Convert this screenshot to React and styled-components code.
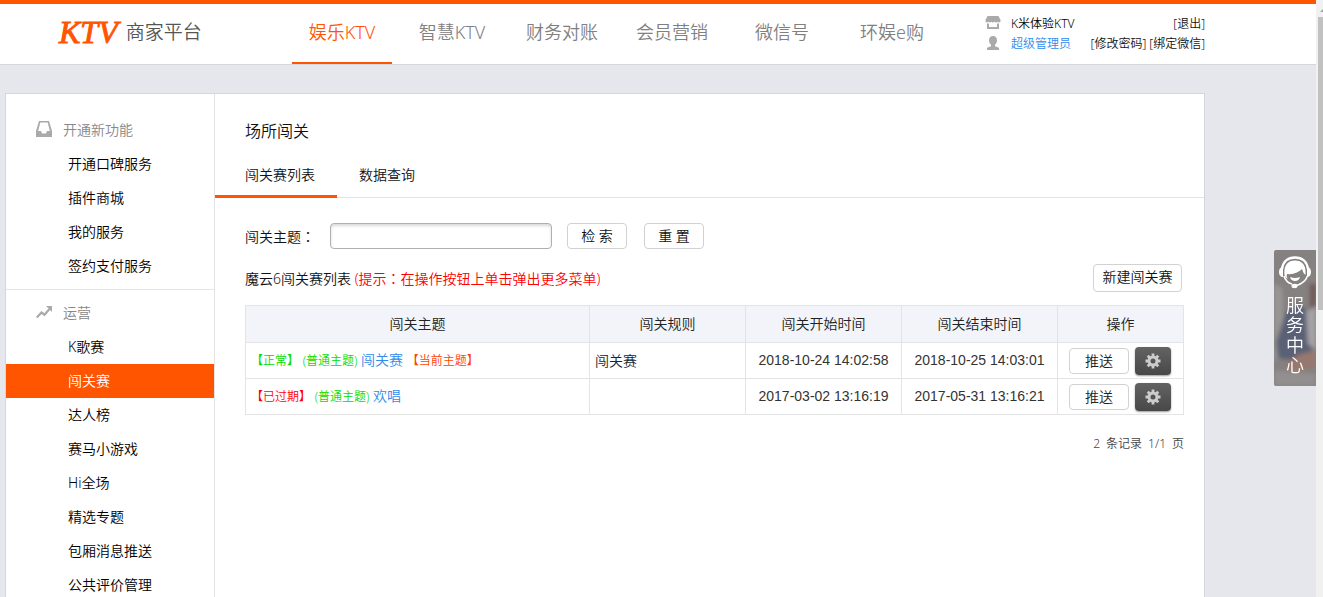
import React, { useState } from 'react';
import styled, { createGlobalStyle } from 'styled-components';

const GlobalStyle = createGlobalStyle`
  * {
    box-sizing: border-box;
  }

  body {
    margin: 0;
    background: #e6e7ec;
    color: #111;
    font-family: 'Noto Sans', 'Noto Sans CJK SC', sans-serif;
    font-size: 14px;
    font-weight: 350;
    overflow: hidden;
  }

  a {
    color: inherit;
    text-decoration: none;
  }

  button,
  input {
    font: inherit;
    color: inherit;
  }
`;

const Page = styled.div`
  height: 100vh;
  overflow: hidden;
  padding-right: 7px;
`;

const Header = styled.header`
  display: flex;
  height: 65px;
  padding: 0 111px 0 59px;
  background: #fff;
  border-top: 4px solid #ff5400;
  border-bottom: 1px solid #d5d6da;
`;

const Logo = styled.a`
  display: flex;
  align-items: center;
  gap: 8px;
  width: 233px;
  height: 56px;
`;

const LogoMark = styled.span`
  color: #ff5400;
  font: italic 400 32px/40px 'Liberation Serif', serif;
  -webkit-text-stroke: 1px #ff5400;
`;

const LogoText = styled.span`
  color: #555;
  font-size: 19px;
  line-height: 26px;
`;

const TopNav = styled.nav`
  display: flex;
  gap: 10px;
`;

const TopLink = styled.a`
  width: 100px;
  height: 60px;
  line-height: 56px;
  text-align: center;
  font-size: 18px;
  color: ${(p) => (p.$active ? '#ff5400' : '#808080')};
  border-bottom: 2px solid ${(p) => (p.$active ? '#ff5400' : 'transparent')};
`;

const Account = styled.div`
  width: 220px;
  margin-left: auto;
  padding-top: 9px;
  font-size: 12px;
`;

const AccountRow = styled.div`
  display: flex;
  align-items: center;
  height: 20px;

  svg {
    margin-right: 10px;
  }
`;

const AccountName = styled.span`
  flex: 1;
  color: ${(p) => (p.$link ? '#2f8cea' : '#000')};
`;

const AccountLink = styled.a`
  margin-left: 3px;
`;

const Panel = styled.div`
  display: flex;
  min-height: 600px;
  margin: 28px 111px 0 5px;
  background: #fff;
  border: 1px solid #d5d6da;
`;

const Sidebar = styled.nav`
  width: 209px;
  padding-top: 13px;
  border-right: 1px solid #e4e4e4;
`;

const MenuSection = styled.section`
  padding: 6px 0;
  border-bottom: 1px solid #e4e4e4;
`;

const MenuTitle = styled.h2`
  display: flex;
  align-items: center;
  gap: 11px;
  height: 34px;
  margin: 0;
  padding: 0 0 2px 30px;
  color: #888;
  font-size: 14px;
  font-weight: inherit;
`;

const MenuLink = styled.a`
  display: block;
  padding-left: 62px;
  line-height: 34px;
  color: ${(p) => (p.$active ? '#fff' : '#000')};
  background: ${(p) => (p.$active ? '#ff5400' : 'transparent')};
`;

const Main = styled.main`
  flex: 1;
  min-width: 0;
`;

const Title = styled.h1`
  margin: 0;
  padding: 20px 30px 0;
  font-size: 16px;
  line-height: 34px;
  font-weight: inherit;
`;

const Tabs = styled.div`
  display: flex;
  height: 50px;
  border-bottom: 1px solid #e4e4e4;
`;

const Tab = styled.button`
  height: 50px;
  padding: 8px 22px 3px;
  border: 0;
  border-bottom: 3px solid ${(p) => (p.$active ? '#ff5400' : 'transparent')};
  background: none;

  &:first-child {
    padding-left: 30px;
  }
`;

const Content = styled.div`
  padding: 25px 20px 0 30px;
`;

const SearchForm = styled.form`
  display: flex;
  align-items: center;
`;

const SearchLabel = styled.label`
  width: 85px;
`;

const Colon = styled.span`
  font-family: 'Noto Sans CJK TC', sans-serif;
`;

const SearchInput = styled.input`
  width: 222px;
  height: 26px;
  margin-right: 15px;
  padding: 0 6px;
  border: 1px solid #b0b0b0;
  border-radius: 4px;
  box-shadow: inset 0 2px 3px rgba(0, 0, 0, 0.15);
`;

const Button = styled.button`
  width: 60px;
  height: 26px;
  padding: 0;
  line-height: 20px;
  background: #fff;
  border: 1px solid #d2d2d2;
  border-radius: 4px;
`;

const ResetButton = styled(Button)`
  margin-left: 17px;
`;

const CreateButton = styled(Button)`
  width: 89px;
  height: 28px;
  margin-right: 2px;
  padding-bottom: 2px;
`;

const ListHeader = styled.div`
  display: flex;
  align-items: center;
  justify-content: space-between;
  margin: 15px 0 13px;
`;

const Hint = styled.span`
  color: #f00;
`;

const Table = styled.table`
  width: 100%;
  table-layout: fixed;
  border-collapse: collapse;
  color: #222;
`;

const HeadCell = styled.th`
  width: ${(p) => p.$width || 'auto'};
  height: 37px;
  padding: 0;
  line-height: 20px;
  font-weight: inherit;
  background: #f3f4f9;
  border: 1px solid #e4e4e4;
`;

const Cell = styled.td`
  height: 36px;
  padding: 0 5px;
  line-height: 20px;
  border: 1px solid #e4e4e4;
`;

const TimeCell = styled(Cell)`
  padding-bottom: 2px;
  color: #333;
  font-family: 'Liberation Sans', Arial, sans-serif;
  text-align: center;
`;

const ActionCell = styled(Cell)`
  padding: 0 6px 0 5px;
`;

const Tag = styled.span`
  font-size: 12px;
  color: ${(p) => p.$color};
`;

const ThemeLink = styled.a`
  color: #2f8cea;
`;

const Actions = styled.div`
  display: flex;
  align-items: center;
  justify-content: center;
  gap: 6px;
`;

const GearButton = styled.button`
  display: flex;
  align-items: center;
  justify-content: center;
  width: 36px;
  height: 28px;
  padding: 0;
  border: 0;
  border-radius: 4px;
  background: linear-gradient(#636363, #484848);
  box-shadow: 0 1px 2px rgba(0, 0, 0, 0.4);
`;

const Pager = styled.div`
  display: flex;
  justify-content: flex-end;
  gap: 6px;
  margin-top: 19px;
  line-height: 20px;
  font-size: 12px;
  color: #444;
`;

const Service = styled.a`
  position: fixed;
  top: 250px;
  right: 7px;
  width: 42px;
  height: 136px;
  overflow: hidden;
  border-radius: 2px 0 0 2px;
  color: #fff;
`;

const ServiceBackdrop = styled.svg`
  position: absolute;
  inset: 0;
`;

const ServiceBody = styled.span`
  position: relative;
  display: flex;
  flex-direction: column;
  align-items: center;
  padding-top: 5px;
`;

const ServiceLabel = styled.span`
  width: 18px;
  margin-top: 6px;
  font-size: 18px;
  line-height: 20px;
`;

const ScrollTrack = styled.div`
  position: fixed;
  top: 0;
  right: 0;
  bottom: 0;
  width: 7px;
  padding: 9px 0 0 2px;
  background: #f1f1f1;
`;

const ScrollArrow = styled.svg`
  display: block;
`;

const ScrollThumb = styled.div`
  height: 293px;
  margin-top: 4px;
  background: #c1c1c1;
`;

const ShopIcon = () => (
  <svg width="16" height="16" viewBox="0 0 16 16" fill="#aaa" aria-hidden="true">
    <path d="M2.500 1h11L15.500 5v1.500q-1.300 1.600-2.800.3-1.500 1.500-3.200 0-1.500 1.400-3 0-1.700 1.500-3.200 0Q1.800 8.100.5 6.500V5z" />
    <path d="M2 8.500h2V12h8V8.500h2V14H2z" />
  </svg>
);

const UserIcon = () => (
  <svg width="16" height="16" viewBox="0 0 16 16" fill="#aaa" aria-hidden="true">
    <path d="M8 1c2.700 0 4 1.800 4 4.200 0 2-.9 3.700-2 4.600v1.400l4 1.600V15H2v-2.200l4-1.600V9.800C4.900 8.900 4 7.200 4 5.200 4 2.800 5.300 1 8 1z" />
  </svg>
);

const TrayIcon = () => (
  <svg width="16" height="16" viewBox="0 0 16 16" fill="#aaa" aria-hidden="true">
    <path fillRule="evenodd" d="M3 0h10l3 10v6H0v-6zM4.300 1.500L2.200 10H5l1 2.500h4L11 10h2.800L11.700 1.500z" />
  </svg>
);

const TrendIcon = () => (
  <svg width="16" height="14" viewBox="0 0 16 14" aria-hidden="true">
    <path d="M.8 12.500l4.700-5 3 2.200L13.500 4" fill="none" stroke="#aaa" strokeWidth="2.200" />
    <path d="M10 1h6v6z" fill="#aaa" />
  </svg>
);

const GearIcon = () => (
  <svg width="16" height="16" viewBox="-8 -8 16 16" aria-hidden="true">
    <circle r="4" fill="none" stroke="#ccc" strokeWidth="3" />
    {[0, 45, 90, 135].map((angle) => (
      <path
        key={angle}
        d="M-1.400-7.500h2.800v3h-2.800zM-1.400 4.500h2.800v3h-2.800z"
        fill="#ccc"
        transform={`rotate(${angle})`}
      />
    ))}
  </svg>
);

const HeadsetIcon = () => (
  <svg width="34" height="34" viewBox="0 0 34 34" aria-hidden="true">
    <path d="M4 14C5 6.500 10 2.500 17 2.500S29 6.500 30 14" fill="none" stroke="#fff" strokeWidth="2.400" />
    <path d="M5 12v10H4q-3-1-3-5t3-5zM29 12v10h1q3-1 3-5t-3-5z" fill="#fff" />
    <path d="M6.500 20C5.500 10 10 5.500 17 5.500s11.500 4.500 10.500 14.500q-2.500-2-3.500-6-6 6-15 5-1 2 .5 5-2.500-1.500-3-4z" fill="#fff" />
    <path d="M12 22q5 2 10 0-1 4-5 4t-5-4z" fill="#fff" />
    <path d="M6 21q2 6.500 8 8M29.500 21q-2.500 7-11 9.500" fill="none" stroke="#fff" strokeWidth="1.600" />
    <ellipse cx="16.500" cy="31" rx="3" ry="2.200" fill="#fff" />
  </svg>
);

const topNav = ['娱乐KTV', '智慧KTV', '财务对账', '会员营销', '微信号', '环娱e购'];

const menu = [
  {
    title: '开通新功能',
    icon: <TrayIcon />,
    items: ['开通口碑服务', '插件商城', '我的服务', '签约支付服务'],
  },
  {
    title: '运营',
    icon: <TrendIcon />,
    items: ['K歌赛', '闯关赛', '达人榜', '赛马小游戏', 'Hi全场', '精选专题', '包厢消息推送', '公共评价管理'],
  },
];

const tabs = ['闯关赛列表', '数据查询'];

const rows = [
  {
    status: '【正常】',
    color: '#0d0',
    name: '闯关赛',
    current: true,
    rule: '闯关赛',
    start: '2018-10-24 14:02:58',
    end: '2018-10-25 14:03:01',
  },
  {
    status: '【已过期】',
    color: '#f00',
    name: '欢唱',
    rule: '',
    start: '2017-03-02 13:16:19',
    end: '2017-05-31 13:16:21',
  },
];

const App = () => {
  const [tab, setTab] = useState(0);

  return (
    <Page>
      <GlobalStyle />
      <Header>
        <Logo href="#">
          <LogoMark>KTV</LogoMark>
          <LogoText>商家平台</LogoText>
        </Logo>
        <TopNav>
          {topNav.map((name, i) => (
            <TopLink key={name} href="#" $active={i === 0}>{name}</TopLink>
          ))}
        </TopNav>
        <Account>
          <AccountRow>
            <ShopIcon />
            <AccountName>K米体验KTV</AccountName>
            <AccountLink href="#">[退出]</AccountLink>
          </AccountRow>
          <AccountRow>
            <UserIcon />
            <AccountName $link>超级管理员</AccountName>
            <AccountLink href="#">[修改密码]</AccountLink>
            <AccountLink href="#">[绑定微信]</AccountLink>
          </AccountRow>
        </Account>
      </Header>

      <Panel>
        <Sidebar>
          {menu.map((section) => (
            <MenuSection key={section.title}>
              <MenuTitle>{section.icon}{section.title}</MenuTitle>
              {section.items.map((item) => (
                <MenuLink key={item} href="#" $active={item === '闯关赛'}>{item}</MenuLink>
              ))}
            </MenuSection>
          ))}
        </Sidebar>

        <Main>
          <Title>场所闯关</Title>
          <Tabs>
            {tabs.map((name, i) => (
              <Tab key={name} type="button" $active={i === tab} onClick={() => setTab(i)}>{name}</Tab>
            ))}
          </Tabs>
          <Content>
            <SearchForm onSubmit={(e) => e.preventDefault()}>
              <SearchLabel htmlFor="theme">闯关主题<Colon>：</Colon></SearchLabel>
              <SearchInput id="theme" type="text" />
              <Button type="submit">检 索</Button>
              <ResetButton type="reset">重 置</ResetButton>
            </SearchForm>

            <ListHeader>
              <span>
                魔云6闯关赛列表 <Hint>(提示<Colon>：</Colon>在操作按钮上单击弹出更多菜单)</Hint>
              </span>
              <CreateButton type="button">新建闯关赛</CreateButton>
            </ListHeader>

            <Table>
              <thead>
                <tr>
                  <HeadCell>闯关主题</HeadCell>
                  <HeadCell $width="156px">闯关规则</HeadCell>
                  <HeadCell $width="156px">闯关开始时间</HeadCell>
                  <HeadCell $width="156px">闯关结束时间</HeadCell>
                  <HeadCell $width="126px">操作</HeadCell>
                </tr>
              </thead>
              <tbody>
                {rows.map((row) => (
                  <tr key={row.name}>
                    <Cell>
                      <Tag $color={row.color}>{row.status}</Tag>{' '}
                      <Tag $color="#0d0">(普通主题)</Tag>{' '}
                      <ThemeLink href="#">{row.name}</ThemeLink>{' '}
                      {row.current && <Tag $color="#ff4200">【当前主题】</Tag>}
                    </Cell>
                    <Cell>{row.rule}</Cell>
                    <TimeCell>{row.start}</TimeCell>
                    <TimeCell>{row.end}</TimeCell>
                    <ActionCell>
                      <Actions>
                        <Button type="button">推送</Button>
                        <GearButton type="button" aria-label="更多"><GearIcon /></GearButton>
                      </Actions>
                    </ActionCell>
                  </tr>
                ))}
              </tbody>
            </Table>

            <Pager>
              <span>2</span>
              <span>条记录</span>
              <span>1/1</span>
              <span>页</span>
            </Pager>
          </Content>
        </Main>
      </Panel>

      <Service href="#">
        <ServiceBackdrop width="42" height="136" viewBox="0 0 42 136" aria-hidden="true">
          <defs>
            <filter id="soften">
              <feGaussianBlur stdDeviation="2" />
            </filter>
          </defs>
          <rect width="42" height="136" fill="#858180" />
          <g filter="url(#soften)">
            <path d="M0 34l8 4 2 60-10 14z" fill="#999695" />
            <path d="M36 34h6v30l-6-4z" fill="#6d5a55" />
            <path d="M12 62l12-8 14 10 4 30-12 18-26-4-2-16z" fill="#5a6074" />
            <path d="M32 62l10-6v44l-8-6z" fill="#a5a3a6" />
            <path d="M10 114l16-10 16-4v16l-22 8z" fill="#97786e" />
            <path d="M0 120l42 4v12H0z" fill="#938e8f" />
          </g>
        </ServiceBackdrop>
        <ServiceBody>
          <HeadsetIcon />
          <ServiceLabel>服务中心</ServiceLabel>
        </ServiceBody>
      </Service>

      <ScrollTrack aria-hidden="true">
        <ScrollArrow width="5" height="4" viewBox="0 0 5 4">
          <path d="M2 3l3-3v3z" fill="#a3a3a3" />
        </ScrollArrow>
        <ScrollThumb />
      </ScrollTrack>
    </Page>
  );
};

export default App;
